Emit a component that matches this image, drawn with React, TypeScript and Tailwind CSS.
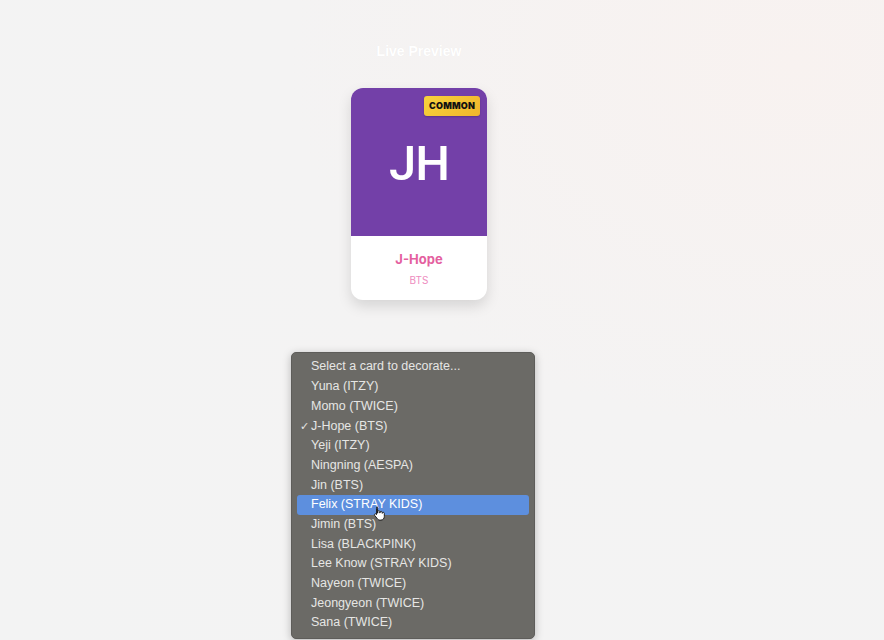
import React from 'react';

const options = [
    'Select a card to decorate...',
    'Yuna (ITZY)',
    'Momo (TWICE)',
    'J-Hope (BTS)',
    'Yeji (ITZY)',
    'Ningning (AESPA)',
    'Jin (BTS)',
    'Felix (STRAY KIDS)',
    'Jimin (BTS)',
    'Lisa (BLACKPINK)',
    'Lee Know (STRAY KIDS)',
    'Nayeon (TWICE)',
    'Jeongyeon (TWICE)',
    'Sana (TWICE)',
];

const HandCursor = () => (
    <svg width="13" height="15" viewBox="0 0 13 15" className="absolute left-[76px] top-[11px]">
        <path
            d="M3.5 1.2c.6 0 1 .4 1 1v5l.3-.1V5.6c0-.6.5-1 1-1s1 .4 1 1V7l.3-.1v-.6c0-.6.5-1 1-1s1 .4 1 1v1l.3-.1c0-.5.4-.9.9-.9s1 .4 1 1v3.2c0 2-1.3 3.6-3.4 3.6H7c-1.3 0-2.1-.6-2.8-1.6L1.6 9.3c-.3-.5-.2-1.1.3-1.4.5-.3 1-.1 1.3.3l.3.5V2.2c0-.6.4-1 1-1z"
            fill="#fff"
            stroke="#111"
            strokeWidth="0.9"
        />
    </svg>
);

const App = () => {
    return (
        <div className="min-h-screen w-full bg-[#f4f3f3] bg-[radial-gradient(ellipse_at_90%_10%,#f8f2f0_0%,#f4f3f3_45%,#f3f3f3_100%)] flex flex-col items-center pt-[41px] pr-[46px] font-['Inter','Liberation_Sans',sans-serif]">
            {/* Title */}
            <h2 className="text-[14px] leading-[20px] font-bold text-white font-['Liberation_Sans',sans-serif] [text-shadow:0_0_1px_rgba(0,0,0,0.05)]">
                Live Preview
            </h2>

            {/* Card preview */}
            <div className="mt-[27px] w-[136px] h-[212px] rounded-[12px] overflow-hidden bg-white shadow-[0_6px_14px_rgba(0,0,0,0.13)] flex flex-col">
                <div className="relative h-[148px] bg-[#7340a8] flex items-center justify-center">
                    <span className="absolute top-[8px] right-[7px] px-[5px] h-[20px] flex items-center rounded-[3px] bg-[linear-gradient(135deg,#f7d33c,#f0b52c)] text-[9px] font-black text-[#111] tracking-[0.02em] shadow-[0_1px_2px_rgba(0,0,0,0.2)]">
                        COMMON
                    </span>
                    <span className="text-white text-[49px] font-medium leading-none tracking-[-0.02em] mt-[2px] font-['Roboto','Inter',sans-serif]">
                        JH
                    </span>
                </div>
                <div className="flex-1 flex flex-col items-center pt-[14px]">
                    <span className="text-[13px] leading-[18px] font-bold text-[#e45f9f]">J-Hope</span>
                    <span className="mt-[6px] text-[10px] leading-[12px] text-[#ee8cc0]">BTS</span>
                </div>
            </div>

            {/* Select dropdown */}
            <div className="mt-[52px] mr-[12px] w-[244px] rounded-[5px] bg-[#6b6a66] shadow-[0_2px_8px_rgba(0,0,0,0.25)] border border-[#5e5d5a] pt-[4px] pb-[5px] px-[5px] font-['Liberation_Sans','Arial',sans-serif]">
                {options.map((opt, i) => {
                    const highlighted = opt === 'Felix (STRAY KIDS)';
                    const checked = opt === 'J-Hope (BTS)';
                    return (
                        <div
                            key={i}
                            className={
                                highlighted
                                    ? 'relative h-[19.7px] flex items-center pl-[14px] rounded-[3px] bg-[#5d8fde] text-white text-[12.5px]'
                                    : 'relative h-[19.7px] flex items-center pl-[14px] text-[#e6e6e4] text-[12.5px]'
                            }
                        >
                            {checked && (
                                <span className="absolute left-[3px] text-[11px] text-[#e6e6e4]">✓</span>
                            )}
                            {opt}
                            {highlighted && <HandCursor />}
                        </div>
                    );
                })}
            </div>
        </div>
    );
};

export default App;
